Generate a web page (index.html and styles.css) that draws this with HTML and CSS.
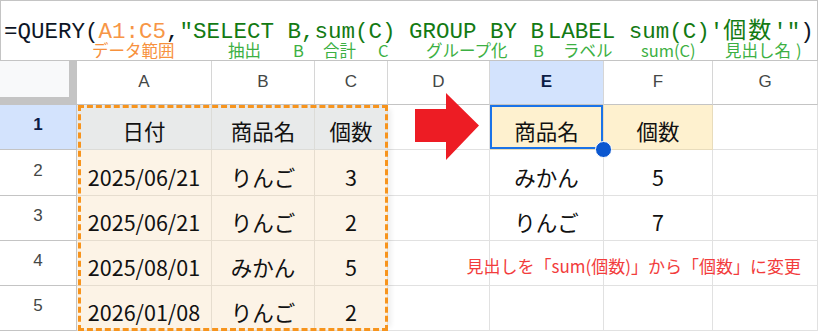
FILE: index.html
```html
<!DOCTYPE html>
<html lang="ja">
<head>
<meta charset="utf-8">
<link rel="stylesheet" href="styles.css">
</head>
<body>
<div class="sheet">
  <div class="formula-bar">
    <div class="formula"><span class="f-fn">=QUERY(</span><span class="f-ref">A1:C5</span><span class="f-fn">,</span><span class="f-str">"SELECT B,sum(C) GROUP BY B<span class="tight"> </span>LABEL sum(C)'<span class="f-cjk">個数</span>'"</span><span class="f-fn">)</span></div>
    <div class="notes">
      <span class="n-orange">データ範囲</span>
      <span>抽出</span>
      <span>B</span>
      <span>合計</span>
      <span>C</span>
      <span>グループ化</span>
      <span>B</span>
      <span>ラベル</span>
      <span>sum(C)</span>
      <span>見出し名</span>
      <span>)</span>
    </div>
  </div>
  <div class="stage">
    <div class="grid">
      <div class="corner"></div>
      <div class="col-head">A</div>
      <div class="col-head">B</div>
      <div class="col-head">C</div>
      <div class="col-head">D</div>
      <div class="col-head active">E</div>
      <div class="col-head">F</div>
      <div class="col-head">G</div>

      <div class="row-head active">1</div>
      <div class="cell head-cell">日付</div>
      <div class="cell head-cell">商品名</div>
      <div class="cell head-cell">個数</div>
      <div class="cell"></div>
      <div class="cell out-head selected">商品名<span class="handle"></span></div>
      <div class="cell out-head">個数</div>
      <div class="cell"></div>

      <div class="row-head">2</div>
      <div class="cell data">2025/06/21</div>
      <div class="cell data">りんご</div>
      <div class="cell data">3</div>
      <div class="cell"></div>
      <div class="cell">みかん</div>
      <div class="cell">5</div>
      <div class="cell"></div>

      <div class="row-head">3</div>
      <div class="cell data">2025/06/21</div>
      <div class="cell data">りんご</div>
      <div class="cell data">2</div>
      <div class="cell"></div>
      <div class="cell">りんご</div>
      <div class="cell">7</div>
      <div class="cell"></div>

      <div class="row-head">4</div>
      <div class="cell data">2025/08/01</div>
      <div class="cell data">みかん</div>
      <div class="cell data">5</div>
      <div class="cell"></div>
      <div class="cell"></div>
      <div class="cell"></div>
      <div class="cell"></div>

      <div class="row-head">5</div>
      <div class="cell data">2026/01/08</div>
      <div class="cell data">りんご</div>
      <div class="cell data">2</div>
      <div class="cell"></div>
      <div class="cell"></div>
      <div class="cell"></div>
      <div class="cell"></div>
    </div>
    <div class="grid overlay">
      <div class="range-outline"></div>
      <div class="arrow-slot">
        <svg class="arrow" width="66" height="69" viewBox="0 0 66 69"><polygon points="1,17 32,17 32,1 65,33.5 32,68 32,50 1,50" fill="#ed1c24"/></svg>
      </div>
      <div class="note">見出しを「sum(個数)」から「個数」に変更</div>
    </div>
  </div>
</div>
</body>
</html>
```
FILE: styles.css
```css
* { box-sizing: border-box; }
html, body { margin: 0; padding: 0; background: #fff; }
body { width: 818px; height: 331px; overflow: hidden; }

.sheet { width: 818px; }

.formula-bar {
  height: 61px;
  border: 1px solid #c4c4c4;
  background: #fff;
}
.formula {
  font-family: "Liberation Mono", "Noto Sans CJK JP", monospace;
  font-size: 22.5px;
  line-height: 20px;
  padding: 21px 0 0 3px;
  white-space: nowrap;
}
.f-fn { color: #0d1526; }
.f-ref { color: #f79646; }
.f-str { color: #137a13; }
.tight { margin-left: -10px; }
.f-cjk {
  font-family: "Noto Sans CJK JP", sans-serif;
  font-size: 23px;
  line-height: 0;
  letter-spacing: 2px;
}

.notes {
  display: grid;
  grid-template-columns: 136px 65px 30px 55px 48px 107px 30px 78px 84px 71px auto;
  padding-left: 91px;
  font-family: "Noto Sans CJK JP", sans-serif;
  font-size: 16.5px;
  line-height: 17px;
  color: #3cb043;
  white-space: nowrap;
}
.notes .n-orange { color: #f7913d; }

.stage { display: grid; }
.stage > .grid { grid-area: 1 / 1; }

.grid {
  display: grid;
  grid-template-columns: 77px 135px 103px 73px 102px 114px 109px 105px;
  grid-template-rows: 44px 45px 46px 45px 45px 45px;
}
.overlay { pointer-events: none; z-index: 2; }

.corner {
  background: #f8f9fa;
  border-right: 8px solid #c4c4c4;
  border-bottom: 8px solid #c4c4c4;
}
.col-head {
  display: flex;
  align-items: center;
  justify-content: center;
  font-family: "Liberation Sans", Arial, sans-serif;
  font-size: 17px;
  color: #444746;
  border-right: 1px solid #d6d6d6;
  border-bottom: 1px solid #c4c4c4;
  padding-bottom: 1px;
}
.col-head.active {
  background: #d3e3fd;
  color: #0b1c46;
  font-weight: bold;
}
.row-head {
  display: flex;
  align-items: center;
  justify-content: center;
  font-family: "Liberation Sans", Arial, sans-serif;
  font-size: 17px;
  color: #444746;
  border-right: 1px solid #c4c4c4;
  border-bottom: 1px solid #c4c4c4;
  padding-bottom: 4px;
}
.row-head.active {
  background: #d3e3fd;
  color: #0b1c46;
  font-weight: bold;
}

.cell {
  position: relative;
  display: flex;
  align-items: flex-end;
  justify-content: center;
  font-family: "Noto Sans CJK JP", sans-serif;
  font-size: 21.5px;
  line-height: 26px;
  color: #111;
  padding-bottom: 5px;
  border-right: 1px solid #e1e1e1;
  border-bottom: 1px solid #e1e1e1;
}
.cell.head-cell {
  background: #e8eaea;
  border-color: #dcdcd8;
}
.cell.data {
  background: #fcf3e6;
  border-color: #e6ddcf;
}
.cell.out-head {
  background: #fef1cf;
  border-color: #e8dcbc;
}
.cell.selected {
  box-shadow: inset 0 0 0 2px #1a73e8;
}
.handle {
  position: absolute;
  right: -9px;
  bottom: -9px;
  width: 17px;
  height: 17px;
  border-radius: 50%;
  background: #0b57d0;
  border: 1px solid #fff;
  z-index: 3;
}

.range-outline {
  grid-column: 2 / 5;
  grid-row: 2 / 7;
  margin-left: 1px;
  border: 3px dashed #f7941d;
  box-shadow: 7px 0 5px -4px rgba(0, 0, 0, 0.07);
}

.arrow-slot {
  grid-column: 5 / 6;
  grid-row: 2 / 4;
}
.arrow {
  display: block;
  margin: -13px 0 0 26px;
}

.note {
  grid-column: 5 / 9;
  grid-row: 5 / 6;
  display: flex;
  align-items: flex-end;
  justify-content: flex-end;
  padding: 0 17px 10px 0;
  font-family: "Noto Sans CJK JP", sans-serif;
  font-size: 17px;
  line-height: 20px;
  color: #f23c3c;
  white-space: nowrap;
}
```
